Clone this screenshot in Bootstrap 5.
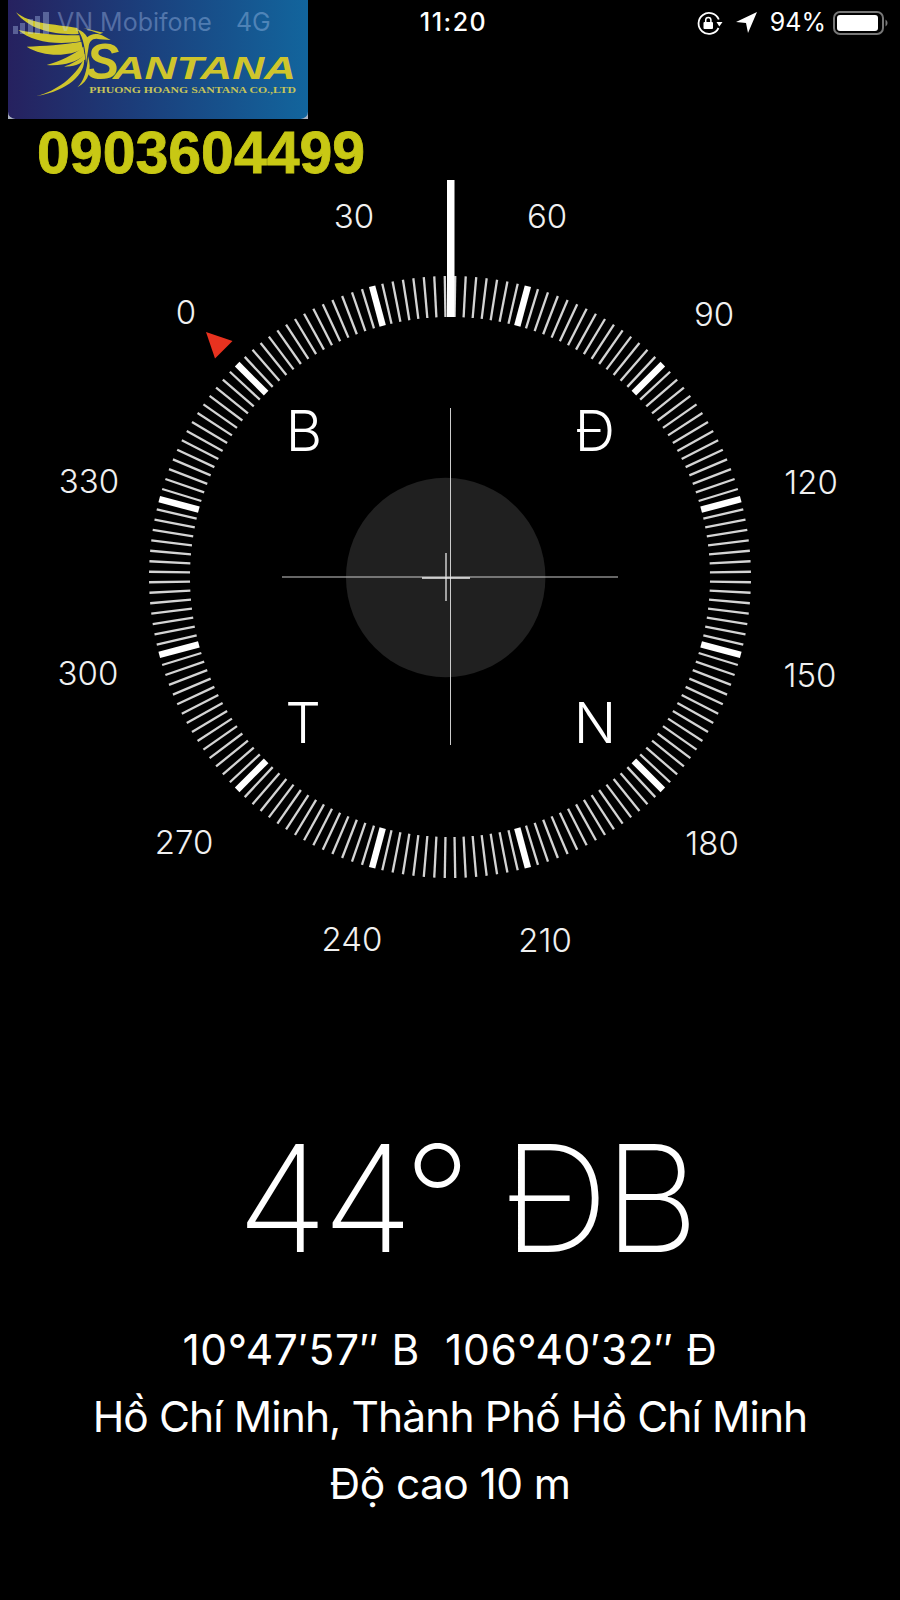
<!DOCTYPE html>
<html lang="en">
<head>
  <meta charset="UTF-8">
  <meta name="viewport" content="width=device-width, initial-scale=1.0">
  <title>Compass</title>
  <link href="https://cdn.jsdelivr.net/npm/bootstrap@5.3.0/dist/css/bootstrap.min.css" rel="stylesheet">
  <style>
    body {
      background: #000;
      color: #fff;
      font-family: Inter, "Noto Sans", sans-serif;
    }
    .screen {
      width: 900px;
      height: 1600px;
      overflow: hidden;
    }
    .status-bar {
      height: 45px;
      font-size: 25px;
      line-height: 45px;
      padding-right: 11px;
      z-index: 2;
    }
    .status-left {
      width: 320px;
      padding-left: 13px;
      color: rgba(190, 215, 255, .34);
    }
    .status-center {
      width: 252px;
      padding-left: 15px;
      font-weight: 500;
      letter-spacing: 1.5px;
    }
    .status-right {
      width: 317px;
    }
    .carrier-gap {
      margin-left: 24px;
    }
    .batt-pct {
      margin-right: -1px;
    }
    .santana-logo {
      top: 0;
      left: 8px;
      width: 300px;
      height: 119px;
      z-index: 1;
    }
    .hotline {
      font-family: "Liberation Sans", Arial, sans-serif;
      font-weight: 700;
      font-size: 59px;
      line-height: 60px;
      color: #c8c814;
      -webkit-text-stroke: .8px #c8c814;
      padding: 78px 0 0 37px;
    }
    .dial {
      display: block;
      margin-top: -3px;
    }
    .dial-label {
      font-size: 33px;
      font-weight: 350;
      fill: #f0f0f0;
      text-anchor: middle;
    }
    .dial-cardinal {
      font-size: 56px;
      font-weight: 350;
      fill: #fff;
      text-anchor: middle;
    }
    .heading-deg {
      font-size: 148px;
      font-weight: 200;
      line-height: 180px;
      letter-spacing: -5px;
      margin-top: 29px;
      padding-left: 31px;
    }
    .info-block {
      margin-top: 27px;
    }
    .info-line {
      font-size: 42.5px;
      line-height: 67px;
    }
    .info-coords {
      letter-spacing: .6px;
    }
    .info-place {
      letter-spacing: -.9px;
    }
    .info-alt {
      letter-spacing: -.6px;
    }
  </style>
</head>
<body>

<div class="screen position-relative">

  <!-- Status bar -->
  <div class="status-bar d-flex position-relative">
    <div class="status-left d-flex align-items-center">
      <svg width="36" height="22" viewBox="0 0 36 22" fill="currentColor" class="me-2 flex-shrink-0">
        <rect x="0" y="14" width="5" height="8"/>
        <rect x="7" y="11" width="5" height="11"/>
        <rect x="15" y="7" width="5" height="15"/>
        <rect x="22" y="4" width="5" height="18"/>
        <rect x="30" y="0" width="6" height="22"/>
      </svg>
      <span>VN Mobifone</span><span class="carrier-gap">4G</span>
    </div>
    <div class="status-center text-center">11:20</div>
    <div class="status-right d-flex align-items-center justify-content-end gap-2">
      <svg width="28" height="24" viewBox="0 0 28 24">
        <path d="M22.5 17 A10.5 10.5 0 1 1 22.8 8.5" fill="none" stroke="#fff" stroke-width="1.8"/>
        <path d="M20.5 11 L26.5 11 L23.3 15.5 Z" fill="#fff"/>
        <rect x="7.5" y="11" width="9.5" height="7" rx="1" fill="#fff"/>
        <path d="M9.7 11 V9 a2.6 2.6 0 0 1 5.2 0 V11" fill="none" stroke="#fff" stroke-width="1.5"/>
      </svg>
      <svg width="22" height="22" viewBox="0 0 22 22" class="ms-1">
        <path d="M0 10 L21 0 L12 21 L10 11 Z" fill="#fff"/>
      </svg>
      <span class="ms-1 batt-pct">94%</span>
      <svg width="56" height="24" viewBox="0 0 56 24">
        <rect x="1" y="1" width="49" height="22" rx="6" fill="none" stroke="#777" stroke-width="2"/>
        <rect x="4" y="4" width="41" height="16" rx="3" fill="#fff"/>
        <path d="M52.5 8.5 a4 4 0 0 1 0 7 Z" fill="#777"/>
      </svg>
    </div>
  </div>

  <!-- Logo sits on top of the status bar -->
  <svg class="santana-logo position-absolute" viewBox="24 0 900 357" preserveAspectRatio="none">
    <defs>
      <linearGradient id="logoBg" x1="0" x2="1" y1="0" y2="0">
        <stop offset="0" stop-color="#26215f"/>
        <stop offset=".45" stop-color="#1b3f7c"/>
        <stop offset="1" stop-color="#12659d"/>
      </linearGradient>
    </defs>
    <rect x="24" y="0" width="900" height="357" fill="#a9b0c0"/>
    <rect x="24" y="-20" width="900" height="377" rx="22" fill="url(#logoBg)"/>
    <g fill="#cfc52c">
      <path d="M48 37 C90 72 160 72 232 84 L236 102 C170 106 88 92 48 37 Z"/>
      <path d="M55 90 C110 100 170 107 238 106 L242 124 C170 136 95 126 55 90 Z"/>
      <path d="M80 140 C130 138 190 134 244 125 L248 146 C210 170 130 172 80 140 Z"/>
      <path d="M140 195 C180 184 222 164 250 140 L254 166 C226 188 190 198 140 195 Z"/>
      <path d="M192 200 C215 192 238 180 254 162 L256 178 C240 194 220 200 192 200 Z"/>
      <path d="M110 288 C170 272 225 232 252 176 C258 220 205 272 110 288 Z"/>
      <path d="M232 262 C250 246 262 212 264 168 C276 208 268 244 232 262 Z"/>
      <path d="M232 88 C245 92 255 100 262 112 C270 102 290 98 306 106 L332 120 L300 118 C280 112 268 122 266 140 L258 190 C256 150 252 115 232 88 Z"/>
      <path d="M250 84 L310 98 L300 102 Z"/>
    </g>
    <text y="238" fill="#cfc52c" font-family="Liberation Sans, Arial, sans-serif" font-weight="700" font-style="italic"><tspan x="258" font-size="150">S</tspan><tspan x="338" font-size="96" textLength="550" lengthAdjust="spacingAndGlyphs">ANTANA</tspan></text>
    <text x="268" y="280" fill="#c5c45a" font-family="Liberation Serif, serif" font-weight="700" font-size="26" textLength="620" lengthAdjust="spacingAndGlyphs">PHUONG HOANG SANTANA CO.,LTD</text>
  </svg>

  <div class="hotline">0903604499</div>

  <!-- Compass dial, filled in by the script below -->
  <svg id="dial" class="dial" width="900" height="900" viewBox="0 180 900 900"></svg>

  <!-- Heading and location -->
  <div class="text-center">
    <div class="heading-deg">44° ĐB</div>
    <div class="info-block">
      <div class="info-line info-coords">10°47′57″ B&nbsp; 106°40′32″ Đ</div>
      <div class="info-line info-place">Hồ Chí Minh, Thành Phố Hồ Chí Minh</div>
      <div class="info-line info-alt">Độ cao 10 m</div>
    </div>
  </div>

</div>

<script>
  const CX = 450, CY = 577;
  const svgNs = "http://www.w3.org/2000/svg";
  const dial = document.getElementById("dial");

  function add(tag, attrs, text) {
    const el = document.createElementNS(svgNs, tag);
    for (const k in attrs) el.setAttribute(k, attrs[k]);
    if (text) el.textContent = text;
    dial.appendChild(el);
    return el;
  }

  // tick ring: one tick every 2 degrees, heavy one every 30
  for (let i = 0; i < 180; i++) {
    const a = (-45 + i * 2) * Math.PI / 180;
    const major = i % 15 === 0;
    add("line", {
      x1: CX + 260 * Math.sin(a), y1: CY - 260 * Math.cos(a),
      x2: CX + 301 * Math.sin(a), y2: CY - 301 * Math.cos(a),
      stroke: major ? "#fff" : "#d4d4d4",
      "stroke-width": major ? 6.5 : 2.3
    });
  }

  // degree labels
  const labels = [
    ["30", 354, 216], ["60", 547, 216], ["0", 186, 312], ["90", 714, 314],
    ["330", 89, 481], ["120", 811, 482], ["300", 88, 673], ["150", 810, 675],
    ["270", 184, 842], ["180", 712, 843], ["240", 352, 939], ["210", 545, 940]
  ];
  labels.forEach(l => add("text", { x: l[1], y: l[2] + 12, class: "dial-label" }, l[0]));

  // cardinal letters
  [["B", 304, 451], ["Đ", 595, 451], ["T", 303, 743], ["N", 595, 743]].forEach(l =>
    add("text", { x: l[1], y: l[2], class: "dial-cardinal" }, l[0]));

  // centre disc and cross lines
  add("circle", { cx: 445.7, cy: 577.5, r: 99.7, fill: "#202020" });
  add("line", { x1: 450.5, y1: 408, x2: 450.5, y2: 745, stroke: "#ccc", "stroke-width": 1 });
  add("line", { x1: 282, y1: 577, x2: 618, y2: 577, stroke: "#ccc", "stroke-width": 1 });
  add("line", { x1: 446, y1: 553, x2: 446, y2: 601, stroke: "#ccc", "stroke-width": 1.5 });
  add("line", { x1: 422, y1: 578, x2: 470, y2: 578, stroke: "#eee", "stroke-width": 1.5 });

  // north pointer and red marker
  add("rect", { x: 447, y: 177, width: 7.5, height: 140, fill: "#fff" });
  add("polygon", { points: "206,332 232.5,341 215,358.5", fill: "#e8321f" });
</script>

<script src="https://cdn.jsdelivr.net/npm/bootstrap@5.3.0/dist/js/bootstrap.bundle.min.js"></script>
</body>
</html>
